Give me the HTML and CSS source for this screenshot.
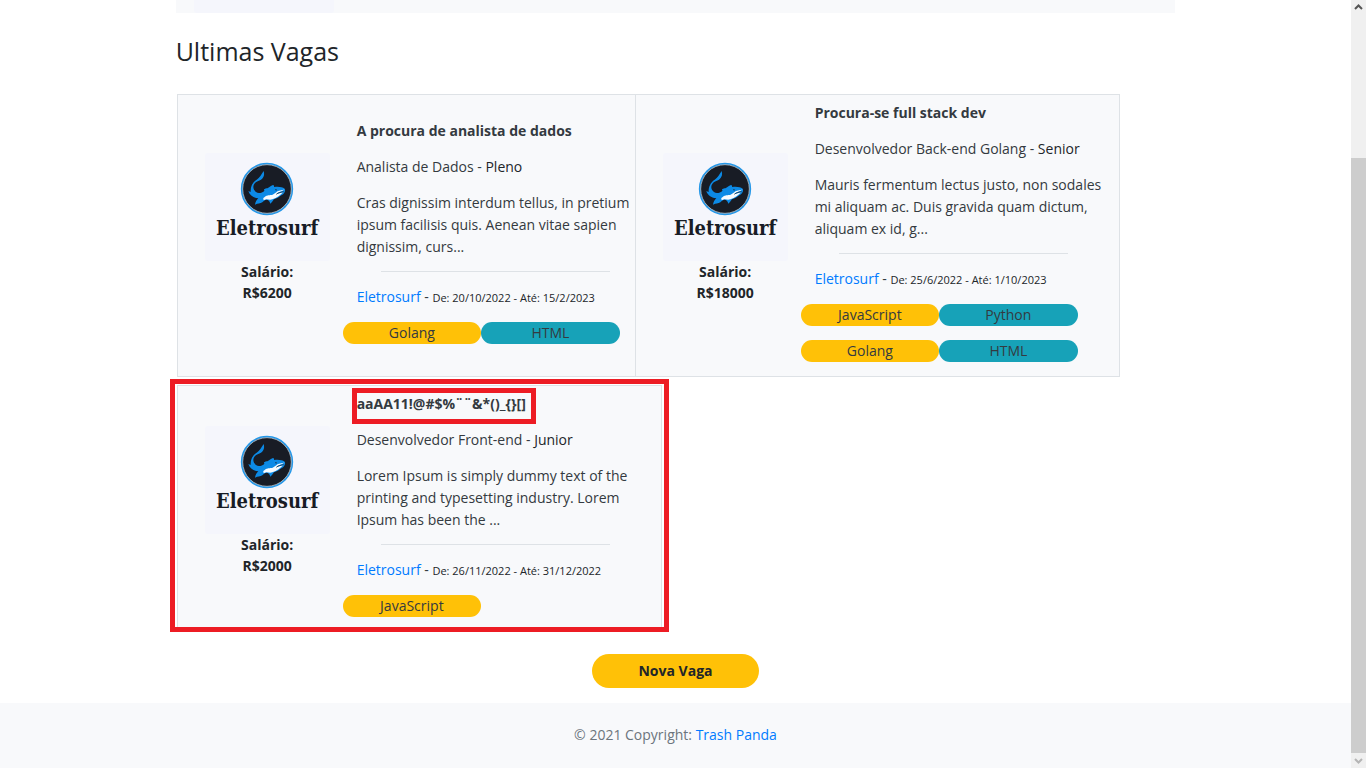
FILE: index.html
```html
<!DOCTYPE html>
<html lang="pt-BR">
<head>
<meta charset="utf-8">
<title>Ultimas Vagas</title>
<link rel="stylesheet" href="styles.css">
</head>
<body>
<svg class="defs" aria-hidden="true">
  <symbol id="shark" viewBox="0 0 168 168">
    <circle cx="84" cy="81" r="76" fill="#181c25" stroke="#2497e8" stroke-width="5"/>
    <circle cx="84" cy="81" r="73" fill="none" stroke="#dceaf5" stroke-width="2"/>
    <path fill="#0c8ae6" d="M74 27 C77 38 75 46 66 53 C60 56 52 58 48 63 C40 72 42 83 51 90 C59 96 69 92 77 86 C72 84 76 80 83 79 C90 78 92 72 102 69 C106 70 104 73 106 75 C118 73 130 75 137 80 C141 86 135 96 127 100 C120 105 113 110 105 112 C101 117 98 123 94 125 C92 119 90 116 86 114 C79 112 76 116 70 121 C63 125 57 124 48 128 C49 120 53 114 58 109 C45 108 32 101 28 87 L35 90 C34 76 40 61 53 53 C62 48 67 37 74 27Z"/>
    <path fill="#f6fbff" d="M137 82 C129 87 118 84 112 91 L101 98 C91 100 86 98 78 104 C73 107 70 112 76 114 C84 109 90 116 100 112 C114 108 125 99 132 91 C125 92 119 96 112 97 C117 89 129 90 137 82Z"/>
    <path fill="none" stroke="#181c25" stroke-width="2" d="M134 89 C126 91 118 91 112 97 M108 83 L114 84"/>
  </symbol>
</svg>
<div class="window">
  <div class="page">
    <main class="container">
      <div class="previous"><div class="previous-logo"></div></div>
      <h1 class="heading">Ultimas Vagas</h1>
      <div class="jobs">
        <article class="job">
          <div class="company">
            <div class="logo"><svg class="shark" aria-hidden="true"><use href="#shark"/></svg><span>Eletrosurf</span></div>
            <strong>Salário:</strong><strong>R$6200</strong>
          </div>
          <div class="details">
            <h2 class="title">A procura de analista de dados</h2>
            <p class="text">Analista de Dados - <span class="level">Pleno</span></p>
            <p class="text">Cras dignissim interdum tellus, in pretium ipsum facilisis quis. Aenean vitae sapien dignissim, curs...</p>
            <hr class="rule">
            <p class="text"><a href="#">Eletrosurf</a> - <small>De: 20/10/2022 - Até: 15/2/2023</small></p>
            <div class="tags"><span class="tag">Golang</span><span class="tag tag-info">HTML</span></div>
          </div>
        </article>
        <article class="job job-overlap">
          <div class="company">
            <div class="logo"><svg class="shark" aria-hidden="true"><use href="#shark"/></svg><span>Eletrosurf</span></div>
            <strong>Salário:</strong><strong>R$18000</strong>
          </div>
          <div class="details">
            <h2 class="title">Procura-se full stack dev</h2>
            <p class="text">Desenvolvedor Back-end Golang - <span class="level">Senior</span></p>
            <p class="text">Mauris fermentum lectus justo, non sodales mi aliquam ac. Duis gravida quam dictum, aliquam ex id, g...</p>
            <hr class="rule">
            <p class="text"><a href="#">Eletrosurf</a> - <small>De: 25/6/2022 - Até: 1/10/2023</small></p>
            <div class="tags"><span class="tag">JavaScript</span><span class="tag tag-info">Python</span><span class="tag">Golang</span><span class="tag tag-info">HTML</span></div>
          </div>
        </article>
        <article class="job job-marked">
          <div class="company">
            <div class="logo"><svg class="shark" aria-hidden="true"><use href="#shark"/></svg><span>Eletrosurf</span></div>
            <strong>Salário:</strong><strong>R$2000</strong>
          </div>
          <div class="details">
            <h2 class="title title-marked">aaAA11!@#$%¨¨&amp;*()_{}[]</h2>
            <p class="text">Desenvolvedor Front-end - <span class="level">Junior</span></p>
            <p class="text">Lorem Ipsum is simply dummy text of the printing and typesetting industry. Lorem Ipsum has been the ...</p>
            <hr class="rule">
            <p class="text"><a href="#">Eletrosurf</a> - <small>De: 26/11/2022 - Até: 31/12/2022</small></p>
            <div class="tags"><span class="tag">JavaScript</span></div>
          </div>
        </article>
      </div>
      <button class="new-job" type="button">Nova Vaga</button>
    </main>
    <footer class="footer">© 2021 Copyright: <a href="#">Trash Panda</a></footer>
  </div>
  <div class="scrollbar" aria-hidden="true">
    <svg class="arrow" viewBox="0 0 15 15"><path d="M4 9 L7.500 5.500 L11 9" fill="none" stroke="#555" stroke-width="2"/></svg>
    <div class="thumb"></div>
    <svg class="arrow" viewBox="0 0 15 15"><path d="M4 6 L7.500 9.500 L11 6" fill="none" stroke="#b5b5b5" stroke-width="2"/></svg>
  </div>
</div>
</body>
</html>
```
FILE: styles.css
```css
* { box-sizing: border-box; }
body {
  margin: 0;
  background: #fff;
  color: #212529;
  font-family: "Open Sans", "Noto Sans", sans-serif;
  font-size: 14px;
  line-height: 22px;
}
a { color: #007bff; text-decoration: none; }
.defs { position: absolute; width: 0; height: 0; }
.window { display: flex; min-height: 100vh; }
.page { flex: 1; display: flex; flex-direction: column; }
.container {
  width: 74%;
  margin: 0 auto;
  display: flex;
  flex-direction: column;
}
.previous { height: 13px; padding-left: 18px; background: #f8f9fb; }
.previous-logo { width: 140px; height: 13px; border-radius: 0 0 3px 3px; background: #f5f6fc; }
.heading { margin: 22px 0 27px; font-size: 25px; font-weight: 500; line-height: 32px; }
.jobs { display: flex; flex-wrap: wrap; row-gap: 8px; padding-left: 1px; }
.job {
  position: relative;
  display: flex;
  align-items: center;
  width: 485px;
  padding: 7px 13px 0 0;
  border: 1px solid #dee2e6;
  background: #f8f9fb;
}
.job-overlap { margin-left: -27px; }
.company {
  flex: 1;
  display: flex;
  flex-direction: column;
  align-items: center;
  padding: 0 0 22px 14px;
  line-height: 21px;
}
.logo {
  display: flex;
  flex-direction: column;
  align-items: center;
  width: 125px;
  height: 108px;
  padding-top: 9px;
  border-radius: 3px;
  background: #f5f6fc;
  color: #181c25;
  font: bold 20px/20px "DejaVu Serif Condensed", "DejaVu Serif", serif;
}
.shark { width: 56px; height: 56px; }
.details { width: 305px; padding-left: 14px; }
.title { width: fit-content; margin: 0 0 14px; font-size: 14px; line-height: 22px; font-weight: 700; color: #343a40; }
.text { margin: 0 0 14px; color: #343a40; }
.level, small { color: #212529; }
small { font-size: 11px; line-height: 11px; }
.rule { height: 1px; margin: -1px 38px 14px 24px; border: 0; background: #dee2e6; }
.tags { display: grid; grid-template-columns: 1fr 1fr; row-gap: 14px; margin: 0 28px 14px -14px; }
.tag { border-radius: 11px; background: #ffc107; color: #343a40; text-align: center; }
.tag-info { background: #17a2b8; }
.job-marked::after {
  content: "";
  position: absolute;
  inset: -7px -8px -1px;
  border: 5px solid #ed1c24;
}
.title-marked { position: relative; }
.title-marked::after {
  content: "";
  position: absolute;
  inset: -5px -10px -9px -5px;
  border: 5px solid #ed1c24;
}
.new-job {
  align-self: center;
  width: 167px;
  height: 34px;
  margin: 22px 0 15px;
  border: 0;
  border-radius: 17px;
  background: #ffc107;
  color: #212529;
  font: inherit;
  font-weight: 700;
}
.footer { flex: 1; padding: 21px 0 22px; background: #f8f9fb; color: #6c757d; text-align: center; }
.scrollbar { display: flex; flex-direction: column; width: 15px; background: #f0f0f0; }
.arrow { width: 15px; height: 15px; }
.thumb { flex: 1; margin-top: 143px; background: #cdcdcd; }
```
